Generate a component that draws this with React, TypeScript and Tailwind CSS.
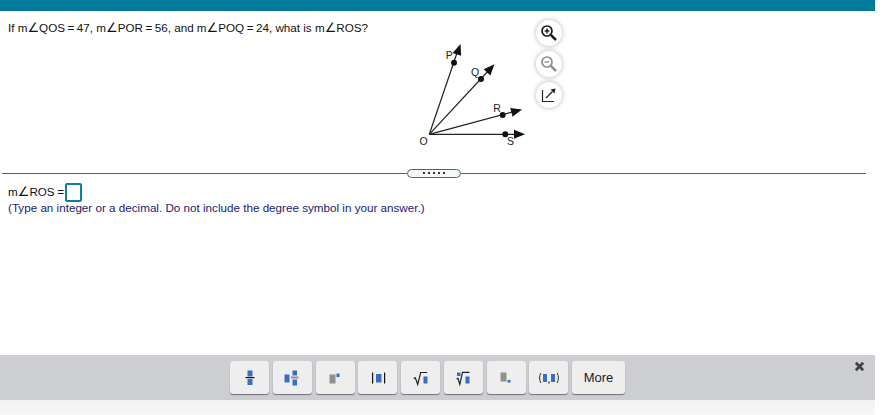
import type { ReactNode } from "react";

const BLUE = "#3a6cc4";
const GRAY = "#8f8f8f";

function Angle() {
  return <span className="font-['DejaVu_Sans'] text-[13px] leading-none">∠</span>;
}

function Eq() {
  return <span className="mx-[2.5px]">=</span>;
}

function Dot() {
  return <span className="block h-[2px] w-[2px] bg-[#333]" />;
}

function ToolIcon({ children }: { children: ReactNode }) {
  return (
    <svg viewBox="0 0 24 24" width="24" height="24" aria-hidden="true">
      {children}
    </svg>
  );
}

function ToolButton({ children, wide }: { children: ReactNode; wide?: boolean }) {
  return (
    <button
      className={`flex h-[33px] ${wide ? "w-[53px]" : "w-[39px]"} items-center justify-center rounded-[3px] bg-[#eeeeef] text-[13px] text-[#222] shadow-[0_1px_1px_#6f7075]`}
    >
      {children}
    </button>
  );
}

function Arrow({ x, y, angle }: { x: number; y: number; angle: number }) {
  return <polygon points="0,0 -11,-4.5 -11,4.5" fill="#111" transform={`translate(${x} ${y}) rotate(${angle})`} />;
}

function Figure() {
  return (
    <svg width="120" height="112" viewBox="415 40 120 112" className="mt-[29px] block flex-none font-['Liberation_Sans']">
      <g stroke="#222" strokeWidth="1.2" fill="none">
        <line x1="429.3" y1="134.3" x2="458" y2="50" />
        <line x1="429.3" y1="134.3" x2="490" y2="69" />
        <line x1="429.3" y1="134.3" x2="516" y2="111" />
        <line x1="429.3" y1="134.3" x2="518" y2="134.3" />
      </g>
      <Arrow x={460.5} y={44} angle={-71} />
      <Arrow x={494.5} y={64.3} angle={-47} />
      <Arrow x={522} y={109.5} angle={-15} />
      <Arrow x={525} y={134.3} angle={0} />
      <circle cx="454" cy="62.7" r="3" fill="#111" />
      <circle cx="481" cy="79" r="3" fill="#111" />
      <circle cx="502.7" cy="115" r="3" fill="#111" />
      <circle cx="505.3" cy="134.3" r="3" fill="#111" />
      <g fontSize="10.5" fill="#222" textAnchor="middle">
        <text x="449.3" y="58.5">P</text>
        <text x="475" y="75.5">Q</text>
        <text x="497" y="111.5">R</text>
        <text x="423.5" y="144.5">O</text>
        <text x="510.5" y="144.5">S</text>
      </g>
    </svg>
  );
}

function RoundButton({ children }: { children: ReactNode }) {
  return (
    <button className="flex h-[26px] w-[26px] items-center justify-center rounded-full bg-white shadow-[0_0_5px_rgba(0,0,0,0.3)]">
      {children}
    </button>
  );
}

function Magnifier({ color, plus }: { color: string; plus?: boolean }) {
  return (
    <svg viewBox="0 0 18 18" width="18" height="18" fill="none" aria-hidden="true">
      <circle cx="7" cy="7" r="5" stroke={color} strokeWidth="1.7" />
      <path d="M4.6 7h4.8" stroke={color} strokeWidth="1.4" />
      {plus && <path d="M7 4.6v4.8" stroke={color} strokeWidth="1.4" />}
      <path d="M10.8 10.8l5.2 5.2" stroke={color} strokeWidth="2.5" />
    </svg>
  );
}

export default function App() {
  return (
    <div className="flex h-[415px] w-[875px] flex-col overflow-hidden bg-white font-['Liberation_Sans',sans-serif] text-[11.66px] text-[#111]">
      <div className="h-[11px] flex-none bg-[#047a9c]" />

      <div className="flex h-[157px] flex-none">
        <div className="w-[415px] flex-none pl-2 pt-[9px] leading-[15px]">
          If m<Angle />QOS<Eq />47, m<Angle />POR<Eq />56, and m<Angle />POQ<Eq />24, what is m<Angle />ROS?
        </div>
        <Figure />
        <div className="ml-[0.5px] flex flex-col gap-[5px] pt-[9px]">
          <RoundButton>
            <Magnifier color="#1c1c1c" plus />
          </RoundButton>
          <RoundButton>
            <Magnifier color="#8e8e8e" />
          </RoundButton>
          <RoundButton>
            <svg viewBox="0 0 16 16" width="16" height="16" fill="none" aria-hidden="true">
              <path d="M1.5 3v11.5H13" stroke="#222" strokeWidth="1.2" />
              <path d="M5 11l6.5-6.5" stroke="#222" strokeWidth="1.2" />
              <polygon points="14.5,1.5 9.5,2.5 13.5,6.5" fill="#222" />
            </svg>
          </RoundButton>
        </div>
      </div>

      <div className="ml-[2px] flex h-[10px] w-[864px] flex-none items-center">
        <div className="h-px flex-1 bg-[#53646e]" />
        <div className="flex h-[9px] w-[54px] flex-none items-center justify-center gap-[3px] rounded-[5px] border border-[#53646e] bg-[#f4f8fa]">
          <Dot />
          <Dot />
          <Dot />
          <Dot />
          <Dot />
        </div>
        <div className="h-px w-[405px] flex-none bg-[#53646e]" />
      </div>

      <div className="flex-1 pl-2 pt-[6px]">
        <div className="flex h-[16px] items-center">
          <span>
            m<Angle />ROS<span className="ml-[2.5px] mr-[1.5px]">=</span>
          </span>
          <span className="block h-[19px] w-[17px] flex-none rounded-[2px] border-2 border-[#0f7f9f] bg-white" />
        </div>
        <div className="leading-[15px] text-[#1a1a6e]">
          (Type an integer or a decimal. Do not include the degree symbol in your answer.)
        </div>
      </div>

      <div className="flex h-[45px] flex-none items-start bg-[#cdced2] pl-[230px] pt-[6px]">
        <div className="flex gap-[3.75px]">
          <ToolButton>
            <ToolIcon>
              <rect x="9.5" y="4.5" width="5" height="6" fill={BLUE} />
              <rect x="7.5" y="11" width="9" height="1.2" fill="#111" />
              <rect x="9.5" y="13" width="5" height="6" fill={BLUE} />
            </ToolIcon>
          </ToolButton>
          <ToolButton>
            <ToolIcon>
              <rect x="4.5" y="8.5" width="5" height="8" fill={BLUE} />
              <rect x="12.5" y="4.5" width="4.5" height="5" fill={BLUE} />
              <rect x="11" y="10.5" width="7.5" height="2" fill={GRAY} />
              <rect x="12.5" y="13.5" width="4.5" height="6" fill={BLUE} />
            </ToolIcon>
          </ToolButton>
          <ToolButton>
            <ToolIcon>
              <rect x="6.5" y="8.5" width="6" height="9" fill={GRAY} />
              <rect x="13.5" y="7.5" width="3" height="3.5" fill={BLUE} />
            </ToolIcon>
          </ToolButton>
          <ToolButton>
            <ToolIcon>
              <rect x="6" y="6.5" width="1.2" height="11" fill="#111" />
              <rect x="18" y="6.5" width="1.2" height="11" fill="#111" />
              <rect x="10" y="8" width="5.5" height="8.5" fill={BLUE} />
            </ToolIcon>
          </ToolButton>
          <ToolButton>
            <ToolIcon>
              <path d="M4.5 12.5l1.8-.8 2.4 6.8 3-12h6.5" fill="none" stroke="#222" strokeWidth="1.2" />
              <rect x="14.5" y="10.5" width="4" height="7" fill={BLUE} />
            </ToolIcon>
          </ToolButton>
          <ToolButton>
            <ToolIcon>
              <rect x="6" y="6.5" width="3.5" height="3.5" fill={BLUE} />
              <path d="M5.5 13l1.5-.6 1.8 6 2.7-12h7" fill="none" stroke="#222" strokeWidth="1.2" />
              <rect x="14.5" y="10.5" width="4" height="7" fill={BLUE} />
            </ToolIcon>
          </ToolButton>
          <ToolButton>
            <ToolIcon>
              <rect x="6.5" y="6.5" width="6" height="9" fill={GRAY} />
              <rect x="13.5" y="14" width="3" height="2.5" fill={BLUE} />
            </ToolIcon>
          </ToolButton>
          <ToolButton>
            <ToolIcon>
              <path d="M3.8 7c-1.6 3-1.6 7 0 10M20.2 7c1.6 3 1.6 7 0 10" fill="none" stroke="#333" strokeWidth="1" />
              <rect x="6" y="8" width="4" height="8" fill={BLUE} />
              <rect x="14" y="8" width="4" height="8" fill={BLUE} />
              <rect x="11.4" y="15.5" width="1.2" height="2" fill="#222" />
            </ToolIcon>
          </ToolButton>
          <ToolButton wide>More</ToolButton>
        </div>
        <div className="ml-auto mr-[10px] mt-[-1px] flex h-[12px] w-[12px] items-center justify-center">
          <svg viewBox="0 0 12 12" width="11" height="11" aria-hidden="true">
            <path d="M2 2l8 8M10 2l-8 8" stroke="#3f4348" strokeWidth="3" />
          </svg>
        </div>
      </div>

      <div className="h-[15px] flex-none bg-gradient-to-b from-[#f1f1f2] to-[#f7f7f7]" />
    </div>
  );
}
